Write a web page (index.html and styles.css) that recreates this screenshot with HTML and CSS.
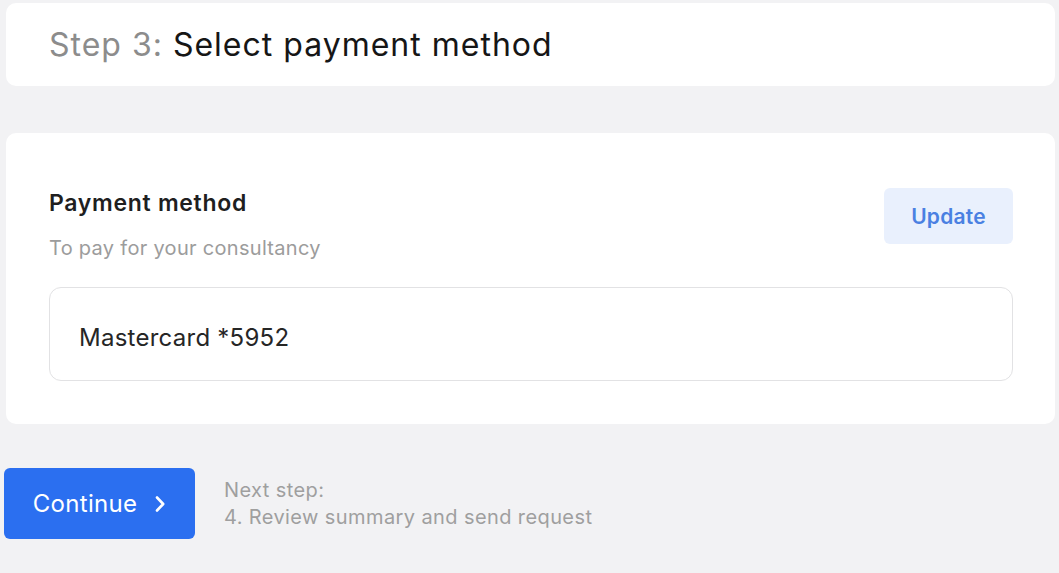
FILE: index.html
```html
<!DOCTYPE html>
<html lang="en">
<head>
<meta charset="utf-8">
<title>Select payment method</title>
<link rel="stylesheet" href="styles.css">
</head>
<body>
<main class="page">
  <header class="card step-card">
    <h1 class="step-title"><span class="step-num">Step 3:</span> Select payment method</h1>
  </header>
  <section class="card pay-card">
    <div class="pay-head">
      <div class="pay-info">
        <h2 class="pay-label">Payment method</h2>
        <p class="pay-sub">To pay for your consultancy</p>
      </div>
      <button class="btn-update" type="button">Update</button>
    </div>
    <div class="pay-field">Mastercard *5952</div>
  </section>
  <footer class="actions">
    <button class="btn-continue" type="button">Continue
      <svg class="chev" width="12" height="18" viewBox="0 0 12 18" aria-hidden="true"><path d="M3 2.5l6.2 6.5-6.2 6.5" fill="none" stroke="#fff" stroke-width="2.6" stroke-linecap="round" stroke-linejoin="round"/></svg>
    </button>
    <div class="next">
      <div>Next step:</div>
      <div>4. Review summary and send request</div>
    </div>
  </footer>
</main>
</body>
</html>
```
FILE: styles.css
```css
* { box-sizing: border-box; }
html, body { margin: 0; padding: 0; }
body {
  background: #f2f2f4;
  font-family: Inter, "Noto Sans", "Liberation Sans", sans-serif;
  width: 1059px;
  height: 573px;
  overflow: hidden;
}
.page {
  padding: 3px 4px 0 4px;
  display: flex;
  flex-direction: column;
}
.card {
  background: #fff;
  border-radius: 10px;
  margin-left: 2px;
}
.step-card {
  height: 83px;
  display: flex;
  align-items: center;
  padding: 0 0 0 43px;
}
.step-title {
  margin: 0;
  font-size: 32px;
  font-weight: 400;
  color: #161616;
  letter-spacing: 1px;
  line-height: 40px;
}
.step-num { color: #8c8c8c; }
.pay-card {
  margin-top: 47px;
  height: 291px;
  padding: 56px 42px 0 43px;
}
.pay-head {
  display: flex;
  justify-content: space-between;
  align-items: flex-start;
}
.pay-label {
  margin: 0;
  font-size: 23px;
  font-weight: 600;
  color: #1f1f1f;
  line-height: 28px;
  letter-spacing: 0.7px;
}
.pay-sub {
  margin: 19px 0 0;
  font-size: 20px;
  color: #9c9c9c;
  line-height: 24px;
  letter-spacing: 0.3px;
}
.btn-update {
  width: 129px;
  height: 56px;
  margin-top: -1px;
  border: none;
  border-radius: 6px;
  background: #e9f0fd;
  color: #4a80e2;
  font-family: inherit;
  font-size: 21px;
  font-weight: 600;
  letter-spacing: 0.2px;
  cursor: pointer;
}
.pay-field {
  margin-top: 27px;
  height: 94px;
  border: 1.5px solid #e2e2e4;
  border-radius: 12px;
  display: flex;
  align-items: center;
  padding: 6px 0 0 29px;
  font-size: 24px;
  letter-spacing: 0.25px;
  color: #262626;
}
.actions {
  margin-top: 44px;
  display: flex;
  align-items: center;
  gap: 29px;
}
.btn-continue {
  width: 191px;
  height: 71px;
  border: none;
  border-radius: 6px;
  background: #2b6ff0;
  color: #fff;
  font-family: inherit;
  font-size: 24px;
  font-weight: 400;
  letter-spacing: 0.3px;
  display: flex;
  align-items: center;
  justify-content: center;
  gap: 17px;
  padding: 0;
}
.chev { display: block; }
.next {
  font-size: 20px;
  color: #9f9f9f;
  line-height: 27px;
  letter-spacing: 0.4px;
}
```
